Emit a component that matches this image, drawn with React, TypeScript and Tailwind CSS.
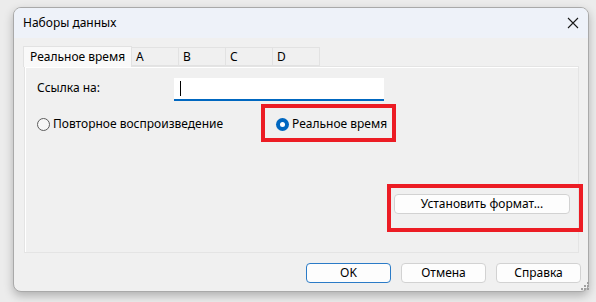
import React from "react";

const font = { fontFamily: '"Noto Sans", "Liberation Sans", sans-serif' };

function Radio({ checked, label }: { checked?: boolean; label: string }) {
  return (
    <label className="flex items-center gap-[3px]">
      {checked ? (
        <span className="flex h-[13px] w-[13px] items-center justify-center rounded-full bg-[#0067c0]">
          <span className="h-[5px] w-[5px] rounded-full bg-white" />
        </span>
      ) : (
        <span className="h-[13px] w-[13px] rounded-full border border-[#5d5d5d] bg-[#f7f7f7]" />
      )}
      <span>{label}</span>
    </label>
  );
}

function DlgButton({ label, primary }: { label: string; primary?: boolean }) {
  return (
    <button
      type="button"
      className={`h-[20px] w-[85px] rounded-[4px] border bg-[#fdfdfd] text-[12px] leading-none text-black ${
        primary ? "border-[#2b7bc7]" : "border-[#d2d2d2]"
      }`}
    >
      {label}
    </button>
  );
}

export default function App() {
  const tabs = ["A", "B", "C", "D"];
  return (
    <div
      className="relative h-[302px] w-[596px] overflow-hidden bg-[#ececec] pl-[13px] pt-[7px] text-[12px] text-black"
      style={font}
    >
      <div className="flex h-[285px] w-[576px] flex-col overflow-hidden rounded-[8px] border border-[#a9a9a9] bg-[#f0f0f0] shadow-[0_4px_10px_rgba(0,0,0,0.25)]">
        {/* title bar */}
        <div className="flex h-[30px] shrink-0 items-center justify-between bg-[#eef2f9] pl-[9px] pr-[8px]">
          <span className="text-[12px]">Наборы данных</span>
          <svg width="12" height="12" viewBox="0 0 12 12" className="mr-[1px]">
            <path d="M1 1 L11 11 M11 1 L1 11" stroke="#1a1a1a" strokeWidth="1.1" />
          </svg>
        </div>

        {/* body */}
        <div className="flex flex-1 flex-col px-[9px] pt-[8px]">
          {/* tabs */}
          <div className="relative z-10 flex h-[21px] items-end">
            <div className="flex h-[21px] w-[109px] items-center border border-b-0 border-[#e2e2e2] bg-[#f9f9f9] pl-[6px]">
              Реальное время
            </div>
            {tabs.map((t) => (
              <div
                key={t}
                className="mb-[1px] flex h-[19px] w-[47px] items-center border border-l-0 border-[#e2e2e2] bg-[#f0f0f0] pl-[4px]"
              >
                {t}
              </div>
            ))}
          </div>

          {/* panel */}
          <div className="-mt-[1px] ml-[1px] flex h-[187px] w-[555px] flex-col border border-[#e4e4e4] bg-[#f0f0f0] pl-[12px] shadow-[inset_1px_1px_0_#ffffff]">
            <div className="mt-[11px] flex h-[23px] items-start">
              <span className="w-[137px] pt-[1px]">Ссылка на:</span>
              <div className="flex h-[23px] w-[210px] items-center border-b-2 border-[#0067c0] bg-white pl-[6px]">
                <span className="h-[15px] w-[1px] bg-black" />
              </div>
            </div>
            <div className="mt-[13px] flex h-[20px] items-center">
              <div className="w-[239px]">
                <Radio label="Повторное воспроизведение" />
              </div>
              <Radio checked label="Реальное время" />
            </div>
            <div className="mt-[60px] flex justify-end pr-[8px]">
              <button
                type="button"
                className="h-[20px] w-[176px] rounded-[4px] border border-[#d2d2d2] bg-[#fdfdfd] text-[12px] leading-none"
              >
                Установить формат...
              </button>
            </div>
          </div>

          {/* buttons */}
          <div className="-mr-[2px] mt-[10px] flex justify-end gap-[10px]">
            <DlgButton label="OK" primary />
            <DlgButton label="Отмена" />
            <DlgButton label="Справка" />
          </div>
        </div>
      </div>

      {/* resize grip */}
      <div className="absolute left-[581px] top-[282px] grid grid-cols-3 gap-[1px]">
        {[0, 0, 1, 0, 1, 1, 1, 1, 1].map((v, i) => (
          <span key={i} className={`h-[2px] w-[2px] ${v ? "bg-[#a0a0a0]" : ""}`} />
        ))}
      </div>

      {/* red annotation boxes */}
      <div className="pointer-events-none absolute left-[261px] top-[104px] h-[38px] w-[135px] border-[4px] border-[#ec1c24]" />
      <div className="pointer-events-none absolute left-[387px] top-[184px] h-[48px] w-[196px] border-[4px] border-[#ec1c24]" />
    </div>
  );
}
